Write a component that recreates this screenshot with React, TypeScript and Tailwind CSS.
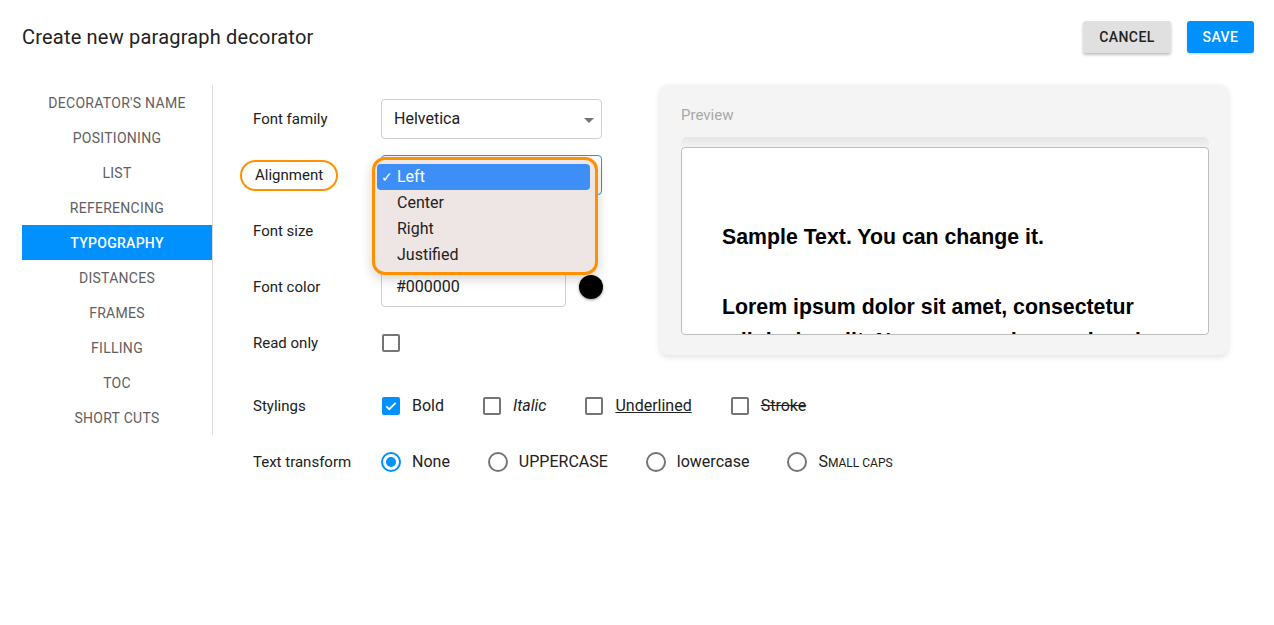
import React, { useState } from "react";

const sections = [
  "Decorator's name",
  "Positioning",
  "List",
  "Referencing",
  "Typography",
  "Distances",
  "Frames",
  "Filling",
  "TOC",
  "Short cuts",
];

const alignments = ["Left", "Center", "Right", "Justified"];

const Checkbox: React.FC<{ checked?: boolean }> = ({ checked }) =>
  checked ? (
    <span className="flex h-[18px] w-[18px] items-center justify-center rounded-[2px] bg-[#0091ff]">
      <svg width="14" height="14" viewBox="0 0 24 24" fill="none">
        <path d="M4 12.5l5 5L20 6.5" stroke="white" strokeWidth="3" />
      </svg>
    </span>
  ) : (
    <span className="block h-[18px] w-[18px] rounded-[2px] border-2 border-[#757575]" />
  );

const Radio: React.FC<{ checked?: boolean }> = ({ checked }) =>
  checked ? (
    <span className="flex h-5 w-5 items-center justify-center rounded-full border-2 border-[#0091ff]">
      <span className="h-[10px] w-[10px] rounded-full bg-[#0091ff]" />
    </span>
  ) : (
    <span className="block h-5 w-5 rounded-full border-2 border-[#757575]" />
  );

const Row: React.FC<{ label: React.ReactNode; children: React.ReactNode }> = ({
  label,
  children,
}) => (
  <div className="flex h-10 items-center">
    <div className="w-[128px] shrink-0">{label}</div>
    {children}
  </div>
);

export default function App() {
  const [active] = useState("Typography");

  return (
    <div
      className="h-[625px] w-full bg-white text-[#212121]"
      style={{ fontFamily: "Roboto, 'Liberation Sans', sans-serif" }}
    >
      {/* header */}
      <div className="flex items-center justify-between pl-[22px] pr-[20px] pt-[21px]">
        <h1 className="text-[20px] leading-[32px] tracking-[0.01em] text-[#222]">
          Create new paragraph decorator
        </h1>
        <div className="flex gap-4">
          <button className="h-8 w-[88px] rounded-[3px] bg-[#e0e0e0] text-[14px] font-medium tracking-[0.03em] text-[#222] shadow-[0_2px_3px_rgba(0,0,0,0.25)]">
            CANCEL
          </button>
          <button className="h-8 w-[67px] rounded-[3px] bg-[#0091ff] text-[14px] font-medium tracking-[0.03em] text-white shadow-[0_1px_2px_rgba(0,0,0,0.2)]">
            SAVE
          </button>
        </div>
      </div>

      <div className="mt-[32px] flex items-start">
        {/* sidebar */}
        <nav className="ml-[22px] w-[191px] border-r border-[#dcdcdc]">
          {sections.map((s) => (
            <div
              key={s}
              className={`flex h-[35px] items-center justify-center pt-[2px] text-[14px] uppercase tracking-[0.02em] ${
                s === active ? "bg-[#0091ff] font-medium text-white" : "text-[#5f5f5f]"
              }`}
            >
              {s}
            </div>
          ))}
        </nav>

        {/* content */}
        <div className="pl-[40px] text-[15px]">
          <div className="flex items-start">
            <div className="mt-[13px] flex w-[349px] flex-col gap-4 pt-px">
              <Row label="Font family">
                <div className="relative flex h-10 w-[221px] items-center rounded-[4px] border border-[#cfcfcf] pl-3 text-[16px]">
                  Helvetica
                  <span className="absolute right-[7px] top-[18px] h-0 w-0 border-x-[5px] border-t-[5px] border-x-transparent border-t-[#757575]" />
                </div>
              </Row>

              <Row
                label={
                  <span className="-ml-[13px] inline-flex h-[31px] items-center rounded-full border-2 border-[#ff9100] px-[13px]">
                    Alignment
                  </span>
                }
              >
                <div className="relative h-10 w-[221px]">
                  <div className="h-10 w-[221px] rounded-[4px] border border-[#2196f3]" />
                  {/* open native menu */}
                  <div className="absolute left-[-9px] top-[2px] z-10 w-[226px] rounded-[13px] border-[3px] border-[#ff9100] bg-[#eee5e5] py-[4px] pl-[2px] pr-[5px] text-[16px] shadow-[0_4px_12px_rgba(0,0,0,0.18)]">
                    {alignments.map((a, i) => (
                      <div
                        key={a}
                        className={`flex h-[26px] items-center rounded-[4px] ${
                          i === 0 ? "bg-[#3d8ef7] text-white" : "text-[#222]"
                        }`}
                      >
                        <span className="w-[20px] pl-[4px] text-[14px]">{i === 0 ? "✓" : ""}</span>
                        {a}
                      </div>
                    ))}
                  </div>
                </div>
              </Row>

              <Row label="Font size">
                <div className="h-10 w-[185px] rounded-[4px] border border-[#cfcfcf]" />
              </Row>

              <Row label="Font color">
                <div className="flex items-center gap-[13px]">
                  <div className="flex h-10 w-[185px] items-center rounded-[4px] border border-[#cfcfcf] pl-[14px] text-[16px]">
                    #000000
                  </div>
                  <span className="h-6 w-6 rounded-full bg-black shadow-[0_1px_3px_rgba(0,0,0,0.4)]" />
                </div>
              </Row>

              <Row label="Read only">
                <span className="ml-px">
                  <Checkbox />
                </span>
              </Row>
            </div>

            {/* preview */}
            <div className="ml-[58px] h-[270px] w-[568px] rounded-[8px] bg-[#f4f4f4] pl-[21px] pr-[19px] pt-[20px] shadow-[0_2px_6px_rgba(0,0,0,0.12)]">
              <div className="text-[15px] leading-5 text-[#a8a8a8]">Preview</div>
              <div className="mt-3 h-[10px] rounded-t-[6px] bg-gradient-to-b from-[#e6e6e6] to-[#f2f2f2]" />
              <div
                className="h-[188px] overflow-hidden rounded-[4px] border border-[#bdbdbd] bg-white pl-[40px] pr-[40px] pt-[72px] text-[21.3px] font-bold leading-[34px] text-black"
                style={{ fontFamily: "'Liberation Sans', Arial, sans-serif" }}
              >
                <p>Sample Text. You can change it.</p>
                <p className="mt-[36px]">
                  Lorem ipsum dolor sit amet, consectetur adipiscing elit. Nam commodo mauris vel
                  lectus.
                </p>
              </div>
            </div>
          </div>

          <div className="mt-[23px] flex flex-col gap-4">
            <Row label="Stylings">
              <div className="ml-px flex items-center gap-[39px] text-[16px]">
                <label className="flex items-center gap-3">
                  <Checkbox checked />
                  Bold
                </label>
                <label className="flex items-center gap-3">
                  <Checkbox />
                  <span className="italic">Italic</span>
                </label>
                <label className="flex items-center gap-3">
                  <Checkbox />
                  <span className="underline">Underlined</span>
                </label>
                <label className="flex items-center gap-3">
                  <Checkbox />
                  <span className="line-through">Stroke</span>
                </label>
              </div>
            </Row>

            <Row label="Text transform">
              <div className="flex items-center gap-[38px] text-[16px]">
                <label className="flex items-center gap-[11px]">
                  <Radio checked />
                  None
                </label>
                <label className="flex items-center gap-[11px]">
                  <Radio />
                  UPPERCASE
                </label>
                <label className="flex items-center gap-[11px]">
                  <Radio />
                  lowercase
                </label>
                <label className="flex items-baseline gap-[11px]">
                  <span className="self-center">
                    <Radio />
                  </span>
                  <span>
                    S<span className="text-[12px]">MALL CAPS</span>
                  </span>
                </label>
              </div>
            </Row>
          </div>
        </div>
      </div>
    </div>
  );
}
